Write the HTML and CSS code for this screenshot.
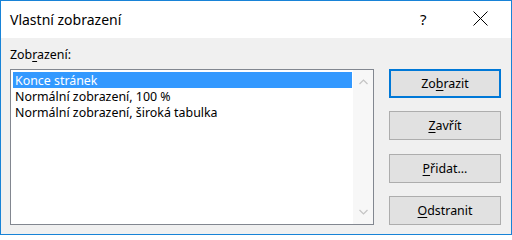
FILE: index.html
```html
<!DOCTYPE html>
<html lang="cs">
<head>
<meta charset="utf-8">
<title>Vlastní zobrazení</title>
<link rel="stylesheet" href="styles.css">
</head>
<body>
<div class="window">
  <div class="titlebar">
    <span class="title">Vlastní zobrazení</span>
    <span class="help">?</span>
    <span class="close">
      <svg width="15" height="15" viewBox="0 0 15 15"><path d="M0.5 0.5 L14.5 14.5 M14.5 0.5 L0.5 14.5" stroke="#000" stroke-width="1" fill="none"/></svg>
    </span>
  </div>
  <div class="content">
    <div class="left">
      <div class="label">Zob<u>r</u>azení:</div>
      <div class="listbox">
        <div class="items">
          <div class="item selected">Konce stránek</div>
          <div class="item">Normální zobrazení, 100 %</div>
          <div class="item">Normální zobrazení, široká tabulka</div>
        </div>
        <div class="scrollbar">
          <svg class="arrow" width="9" height="6" viewBox="0 0 9 6"><path d="M0.5 5 L4.5 1 L8.5 5" stroke="#c4c4c4" stroke-width="1.2" fill="none"/></svg>
          <svg class="arrow" width="9" height="6" viewBox="0 0 9 6"><path d="M0.5 1 L4.5 5 L8.5 1" stroke="#c4c4c4" stroke-width="1.2" fill="none"/></svg>
        </div>
      </div>
    </div>
    <div class="buttons">
      <div class="btn default">Zo<u>b</u>razit</div>
      <div class="btn"><u>Z</u>avřít</div>
      <div class="btn"><u>P</u>řidat...</div>
      <div class="btn"><u>O</u>dstranit</div>
    </div>
  </div>
</div>
</body>
</html>
```
FILE: styles.css
```css
html, body {
  margin: 0;
  padding: 0;
  background: #ffffff;
}
.window {
  width: 512px;
  height: 235px;
  box-sizing: border-box;
  border: 1px solid #1883d7;
  display: flex;
  flex-direction: column;
  font-family: "Noto Sans", "Open Sans", sans-serif;
  font-size: 12.4px;
  color: #000;
}
.titlebar {
  height: 37px;
  flex: none;
  background: #ffffff;
  display: flex;
  align-items: center;
}
.title {
  margin-left: 9px;
  font-size: 14px;
  flex: 1;
  margin-top: -1px;
}
.help {
  font-size: 15px;
  width: 12px;
  margin-right: 41px;
  margin-top: -2px;
}
.close {
  width: 15px;
  height: 15px;
  margin-right: 23px;
  margin-top: -2px;
  display: flex;
}
.content {
  flex: 1;
  background: #f0f0f0;
  display: flex;
  padding: 9px 10px 0 9px;
  gap: 15px;
}
.left {
  width: 364px;
  display: flex;
  flex-direction: column;
}
.label {
  height: 16px;
  line-height: 16px;
  margin-bottom: 6px;
}
.listbox {
  height: 156px;
  box-sizing: border-box;
  border: 1px solid #828790;
  background: #ffffff;
  display: flex;
}
.items {
  flex: 1;
  padding: 2px 0 0 2px;
}
.item {
  height: 16px;
  line-height: 17px;
  padding-left: 2px;
  white-space: nowrap;
}
.item.selected {
  background: #3399ff;
  color: #ffffff;
}
.scrollbar {
  width: 20px;
  background: #f7f7f7;
  display: flex;
  flex-direction: column;
  justify-content: space-between;
  align-items: center;
  padding: 9px 0 9px 0;
  margin-left: 1px;
}
.arrow {
  display: block;
}
.buttons {
  width: 112px;
  height: 156px;
  margin-top: 22px;
  display: flex;
  flex-direction: column;
  justify-content: space-between;
}
.btn {
  height: 29px;
  box-sizing: border-box;
  border: 1px solid #adadad;
  background: #e1e1e1;
  display: flex;
  align-items: center;
  justify-content: center;
}
.btn.default {
  border: 2px solid #0078d7;
}
u {
  text-decoration-thickness: 1px;
  text-underline-offset: 2px;
}
```
